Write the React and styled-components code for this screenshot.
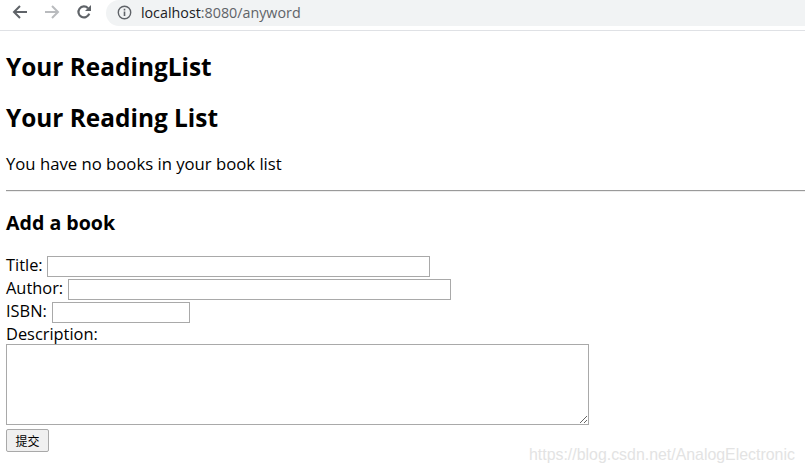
import React from "react";
import styled, { createGlobalStyle } from "styled-components";

const Global = createGlobalStyle`
  html, body { margin: 0; padding: 0; background: #fff; }
  body { font-family: "Open Sans", "Noto Sans", "Noto Sans CJK SC", sans-serif; color: #000; overflow: hidden; }
`;
const Page = styled.div`position: relative; width: 805px; height: 473px; overflow: hidden;`;
const BrowserBar = styled.header`
  height: 31px; box-sizing: border-box; border-bottom: 1px solid #dfe1e5; display: flex; align-items: flex-start;
`;
const NavButton = styled.span`
  width: 20px; height: 20px; margin-top: 2px; display: flex; align-items: center; justify-content: center; margin-left: ${p => p.$gap}px;
`;
const Omnibox = styled.div`
  margin-left: 12px; width: 700px; height: 26px; border-radius: 13px 0 0 13px; background: #f1f3f4;
  display: flex; align-items: center; padding: 0 0 2px 11px; box-sizing: border-box; font-size: 14.3px; color: #5f6368;
`;
const Host = styled.span`color: #202124; margin-left: 9px;`;
const Main = styled.main`padding: 0 6px;`;
const Title = styled.h2`margin: 0; font-size: 24.4px; line-height: 32px; font-weight: 700; padding-top: ${p => p.$top}px;`;
const Message = styled.p`margin: 0; padding-top: 19px; font-size: 16.7px; line-height: 22px;`;
const Rule = styled.hr`margin: 15px -6px 0 0; border: 0; border-top: 1px solid #9a9a9a; border-bottom: 1px solid #eee; height: 0;`;
const SubTitle = styled.h3`margin: 0; padding-top: 18px; font-size: 19.6px; line-height: 26px; font-weight: 700;`;
const Form = styled.form`padding-top: 20px; font-size: 16.4px;`;
const Row = styled.div`display: flex; align-items: flex-start; height: ${p => p.$h || 23}px; gap: ${p => p.$gap || 4.5}px; line-height: 18px;`;
const TextInput = styled.input`
  box-sizing: border-box; height: 21px; width: ${p => p.$w}px; border: 1px solid #a9a9a9; padding: 1px 2px; margin: 0; background: #fff; outline: none;
`;
const Area = styled.textarea`
  display: block; box-sizing: border-box; width: 583px; height: 81px; border: 1px solid #a9a9a9; margin: 0; padding: 2px; background: #fff; outline: none;
`;
const Submit = styled.button`
  display: block; box-sizing: border-box; width: 43px; height: 23px; margin-top: 4px; padding: 0; background: #f0f0f0; border: 1px solid #a9a9a9; border-radius: 2px;
  font: 12px "Noto Sans CJK SC", sans-serif; color: #000;
`;
const Watermark = styled.span`
  position: absolute; left: 529px; top: 446px; font: 15.9px "Liberation Sans", sans-serif; color: #e3e3e3; white-space: nowrap;
`;

const Back = ({ c }) => (
  <svg width="16" height="16" viewBox="0 0 16 16" fill="none" stroke={c} strokeWidth="2"><path d="M15 8H2M8 2 2 8l6 6" /></svg>
);
const Forward = ({ c }) => (
  <svg width="16" height="16" viewBox="0 0 16 16" fill="none" stroke={c} strokeWidth="2"><path d="M1 8h13M8 2l6 6-6 6" /></svg>
);
const Reload = () => (
  <svg width="16" height="16" viewBox="0 0 16 16" fill="none"><path d="M13.2 9.6A5.5 5.5 0 1 1 12 4.2" stroke="#5f6368" strokeWidth="2.2" /><path d="M15 1v6H9z" fill="#5f6368" /></svg>
);
const Info = () => (
  <svg width="15" height="15" viewBox="0 0 15 15" fill="none"><circle cx="7.5" cy="7.5" r="6.2" stroke="#5f6368" strokeWidth="1.4" /><path d="M7.5 6.5v4.6M7.5 3.8v1.6" stroke="#5f6368" strokeWidth="1.6" /></svg>
);

export default function App() {
  return (
    <Page>
      <Global />
      <BrowserBar>
        <NavButton $gap={10}><Back c="#5f6368" /></NavButton>
        <NavButton $gap={12}><Forward c="#b9bbbe" /></NavButton>
        <NavButton $gap={12}><Reload /></NavButton>
        <Omnibox><Info /><Host>localhost</Host>:8080/anyword</Omnibox>
      </BrowserBar>
      <Main>
        <Title $top={20}>Your ReadingList</Title>
        <Title $top={19}>Your Reading List</Title>
        <Message>You have no books in your book list</Message>
        <Rule />
        <SubTitle>Add a book</SubTitle>
        <Form onSubmit={e => e.preventDefault()}>
          <Row>Title:<TextInput $w={383} /></Row>
          <Row>Author:<TextInput $w={383} /></Row>
          <Row $gap={5.5}>ISBN:<TextInput $w={138} /></Row>
          <Row $h={19}>Description:</Row>
          <Area />
          <Submit>提交</Submit>
        </Form>
      </Main>
      <Watermark>https://blog.csdn.net/AnalogElectronic</Watermark>
    </Page>
  );
}
